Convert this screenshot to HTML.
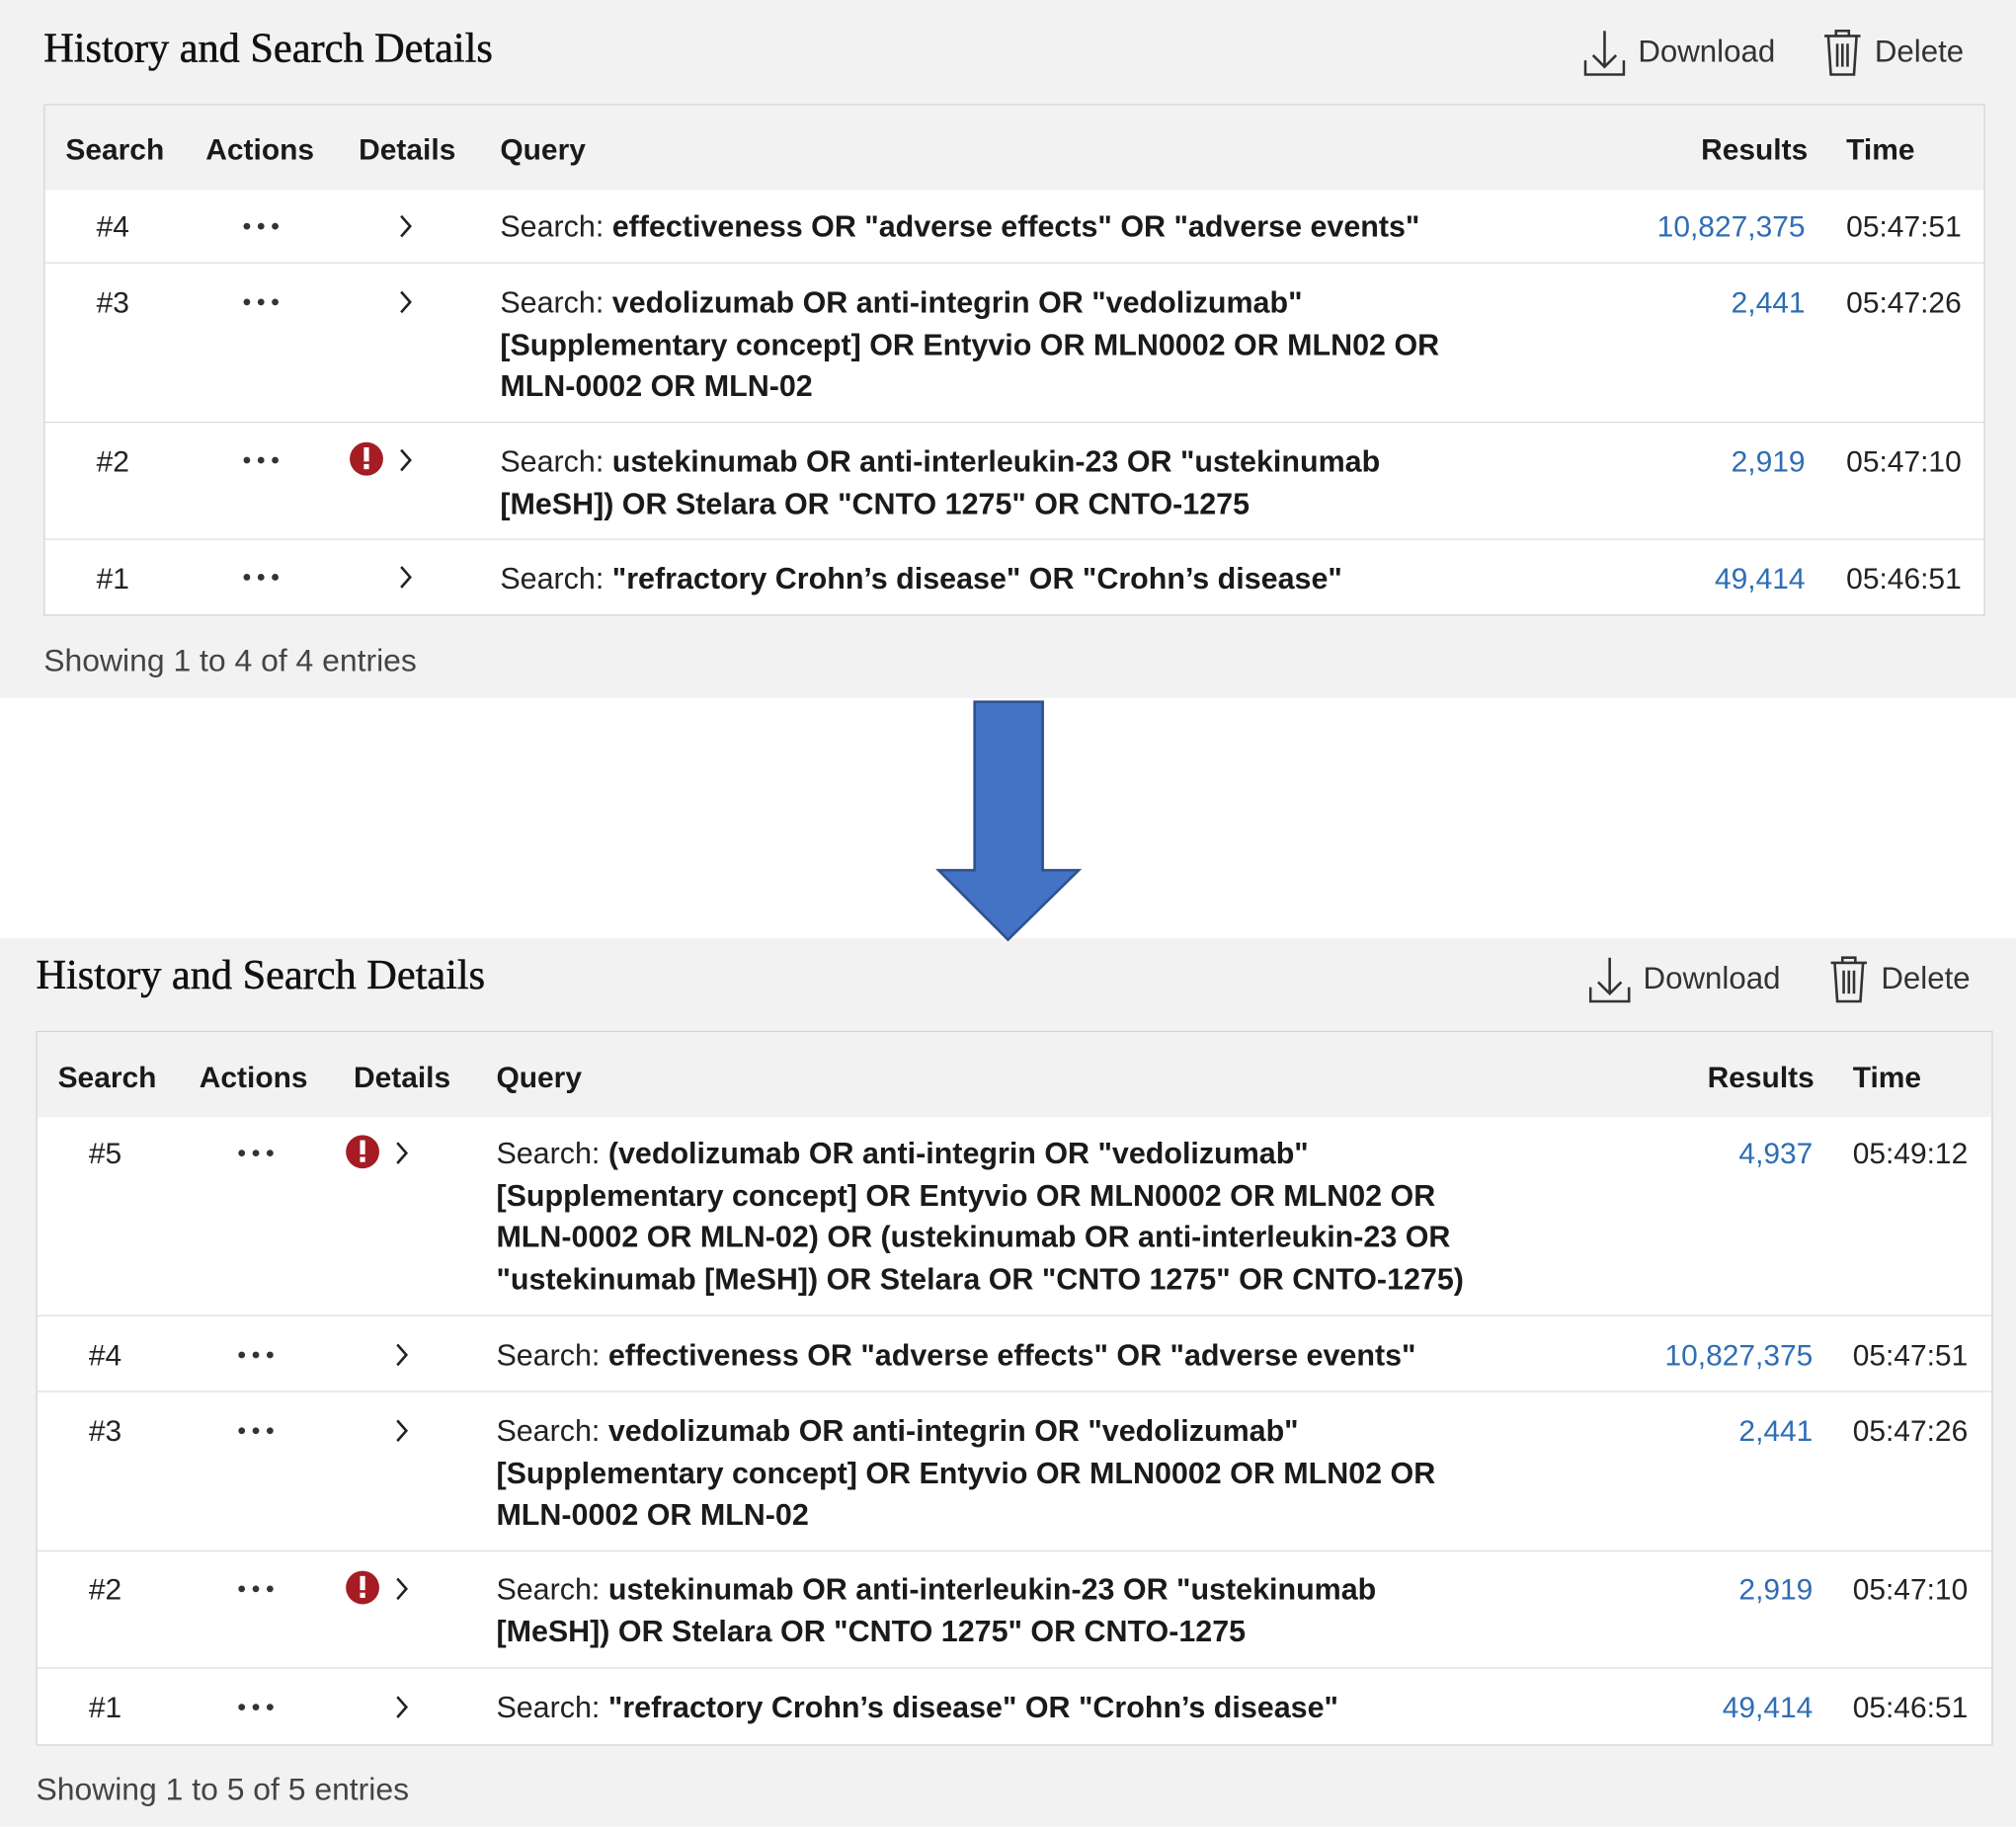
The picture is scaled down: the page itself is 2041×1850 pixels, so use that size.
<!DOCTYPE html>
<html><head><meta charset="utf-8"><style>
html,body{margin:0;padding:0;width:2041px;height:1850px;overflow:hidden;background:#fff}
#s{position:absolute;left:0;top:0;width:1568px;height:1421px;transform:scale(1.30166);transform-origin:0 0;font-family:"Liberation Sans",sans-serif;color:#222}
.bg{position:absolute;left:0;width:1568px;background:#f2f2f2}
.t{position:absolute;white-space:nowrap;font-size:23px;line-height:32.5px}
.q{font-size:23.4px}
.title{position:absolute;font-family:"Liberation Serif",serif;font-size:32.5px;color:#111;white-space:nowrap;-webkit-text-stroke:0.4px #111}
.box{position:absolute;border:1px solid #d3d3d3;background:#fff;box-sizing:border-box}
.hdr{position:absolute;left:0;right:0;top:0;height:66px;background:#f2f2f2}
.h{position:absolute;font-weight:bold;font-size:23px;line-height:32px;color:#1a1a1a;white-space:nowrap}
.line{position:absolute;left:0;right:0;height:1px;background:#dedede}
.b{font-weight:bold;color:#1a1a1a}
.r{position:absolute;text-align:right;color:#2f6db5;font-size:23px;line-height:32.5px}
.act{position:absolute;font-size:24px;color:#333;white-space:nowrap}
.sh{position:absolute;font-size:24.5px;color:#444;white-space:nowrap}
</style></head><body><div id="s">
<div class="bg" style="top:0;height:543px"></div>
<div class="bg" style="top:730px;height:691px"></div>

<svg style="position:absolute;left:0;top:0" width="1568" height="740"><polygon points="758,546 811,546 811,677 839,677 784,731 730,677 758,677" fill="#4472c4" stroke="#2f528f" stroke-width="2"/></svg>

<!-- TOP PANEL -->
<div class="title" style="left:34px;top:20px">History and Search Details</div>
<svg style="position:absolute;left:1232px;top:22px" width="32" height="38" viewBox="0 0 32 38"><path d="M16 2V30M7 21l9 9 9-9M1 25v11h30V25" fill="none" stroke="#333" stroke-width="2"/></svg>
<div class="act" style="left:1274px;top:27px">Download</div>
<svg style="position:absolute;left:1418px;top:22px" width="30" height="38" viewBox="0 0 30 38"><path d="M1 6h28M10 6V2h10v4M4 6l2 30h18l2-30M11 12v18M15 12v18M19 12v18" fill="none" stroke="#333" stroke-width="2"/></svg>
<div class="act" style="left:1458px;top:27px">Delete</div>

<div class="box" style="left:34px;top:81px;width:1510px;height:398px">
 <div class="hdr"></div>
 <div class="line" style="top:122px"></div><div class="line" style="top:246px"></div><div class="line" style="top:337px"></div>
</div>
<div class="h" style="left:51px;top:100px">Search</div>
<div class="h" style="left:160px;top:100px">Actions</div>
<div class="h" style="left:279px;top:100px">Details</div>
<div class="h" style="left:389px;top:100px">Query</div>
<div class="h" style="left:1323px;top:100px">Results</div>
<div class="h" style="left:1436px;top:100px">Time</div>

<div class="t" style="left:75px;top:160px">#4</div>
<div class="t" style="left:75px;top:219px">#3</div>
<div class="t" style="left:75px;top:343px">#2</div>
<div class="t" style="left:75px;top:434px">#1</div>
<svg style="position:absolute;left:0;top:0" width="1568" height="543">
 <g fill="#333"><circle cx="192" cy="176" r="2.6"/><circle cx="203" cy="176" r="2.6"/><circle cx="214" cy="176" r="2.6"/>
 <circle cx="192" cy="235" r="2.6"/><circle cx="203" cy="235" r="2.6"/><circle cx="214" cy="235" r="2.6"/>
 <circle cx="192" cy="358" r="2.6"/><circle cx="203" cy="358" r="2.6"/><circle cx="214" cy="358" r="2.6"/>
 <circle cx="192" cy="449" r="2.6"/><circle cx="203" cy="449" r="2.6"/><circle cx="214" cy="449" r="2.6"/></g>
 <g fill="none" stroke="#222" stroke-width="2"><path d="M312 168l7 8-7 8"/><path d="M312 227l7 8-7 8"/><path d="M312 350l7 8-7 8"/><path d="M312 441l7 8-7 8"/></g>
 <circle cx="285" cy="357" r="13" fill="#a51c24"/><rect x="283" y="348" width="4" height="11" fill="#fff"/><rect x="283" y="361" width="4" height="4" fill="#fff"/>
</svg>
<div class="t q" style="left:389px;top:160px">Search: <span class="b">effectiveness OR "adverse effects" OR "adverse events"</span></div>
<div class="t q" style="left:389px;top:219px">Search: <span class="b">vedolizumab OR anti-integrin OR "vedolizumab"<br>[Supplementary concept] OR Entyvio OR MLN0002 OR MLN02 OR<br>MLN-0002 OR MLN-02</span></div>
<div class="t q" style="left:389px;top:343px">Search: <span class="b">ustekinumab OR anti-interleukin-23 OR "ustekinumab<br>[MeSH]) OR Stelara OR "CNTO 1275" OR CNTO-1275</span></div>
<div class="t q" style="left:389px;top:434px">Search: <span class="b">"refractory Crohn’s disease" OR "Crohn’s disease"</span></div>
<div class="r" style="right:164px;top:160px">10,827,375</div>
<div class="r" style="right:164px;top:219px">2,441</div>
<div class="r" style="right:164px;top:343px">2,919</div>
<div class="r" style="right:164px;top:434px">49,414</div>
<div class="t" style="left:1436px;top:160px">05:47:51</div>
<div class="t" style="left:1436px;top:219px">05:47:26</div>
<div class="t" style="left:1436px;top:343px">05:47:10</div>
<div class="t" style="left:1436px;top:434px">05:46:51</div>
<div class="sh" style="left:34px;top:501px">Showing 1 to 4 of 4 entries</div>

<!-- BOTTOM PANEL -->
<div class="title" style="left:28px;top:741px">History and Search Details</div>
<svg style="position:absolute;left:1236px;top:743px" width="32" height="38" viewBox="0 0 32 38"><path d="M16 2V30M7 21l9 9 9-9M1 25v11h30V25" fill="none" stroke="#333" stroke-width="2"/></svg>
<div class="act" style="left:1278px;top:748px">Download</div>
<svg style="position:absolute;left:1423px;top:743px" width="30" height="38" viewBox="0 0 30 38"><path d="M1 6h28M10 6V2h10v4M4 6l2 30h18l2-30M11 12v18M15 12v18M19 12v18" fill="none" stroke="#333" stroke-width="2"/></svg>
<div class="act" style="left:1463px;top:748px">Delete</div>

<div class="box" style="left:28px;top:802px;width:1522px;height:556px">
 <div class="hdr"></div>
 <div class="line" style="top:220px"></div><div class="line" style="top:279px"></div><div class="line" style="top:403px"></div><div class="line" style="top:494px"></div>
</div>
<div class="h" style="left:45px;top:822px">Search</div>
<div class="h" style="left:155px;top:822px">Actions</div>
<div class="h" style="left:275px;top:822px">Details</div>
<div class="h" style="left:386px;top:822px">Query</div>
<div class="h" style="left:1328px;top:822px">Results</div>
<div class="h" style="left:1441px;top:822px">Time</div>

<div class="t" style="left:69px;top:881px">#5</div>
<div class="t" style="left:69px;top:1038px">#4</div>
<div class="t" style="left:69px;top:1097px">#3</div>
<div class="t" style="left:69px;top:1220px">#2</div>
<div class="t" style="left:69px;top:1312px">#1</div>
<svg style="position:absolute;left:0;top:0" width="1568" height="1421">
 <g fill="#333">
 <circle cx="188" cy="897" r="2.6"/><circle cx="199" cy="897" r="2.6"/><circle cx="210" cy="897" r="2.6"/>
 <circle cx="188" cy="1054" r="2.6"/><circle cx="199" cy="1054" r="2.6"/><circle cx="210" cy="1054" r="2.6"/>
 <circle cx="188" cy="1113" r="2.6"/><circle cx="199" cy="1113" r="2.6"/><circle cx="210" cy="1113" r="2.6"/>
 <circle cx="188" cy="1236" r="2.6"/><circle cx="199" cy="1236" r="2.6"/><circle cx="210" cy="1236" r="2.6"/>
 <circle cx="188" cy="1328" r="2.6"/><circle cx="199" cy="1328" r="2.6"/><circle cx="210" cy="1328" r="2.6"/></g>
 <g fill="none" stroke="#222" stroke-width="2"><path d="M309 889l7 8-7 8"/><path d="M309 1046l7 8-7 8"/><path d="M309 1105l7 8-7 8"/><path d="M309 1228l7 8-7 8"/><path d="M309 1320l7 8-7 8"/></g>
 <circle cx="282" cy="896" r="13" fill="#a51c24"/><rect x="280" y="887" width="4" height="11" fill="#fff"/><rect x="280" y="900" width="4" height="4" fill="#fff"/>
 <circle cx="282" cy="1235" r="13" fill="#a51c24"/><rect x="280" y="1226" width="4" height="11" fill="#fff"/><rect x="280" y="1239" width="4" height="4" fill="#fff"/>
</svg>
<div class="t q" style="left:386px;top:881px">Search: <span class="b">(vedolizumab OR anti-integrin OR "vedolizumab"<br>[Supplementary concept] OR Entyvio OR MLN0002 OR MLN02 OR<br>MLN-0002 OR MLN-02) OR (ustekinumab OR anti-interleukin-23 OR<br>"ustekinumab [MeSH]) OR Stelara OR "CNTO 1275" OR CNTO-1275)</span></div>
<div class="t q" style="left:386px;top:1038px">Search: <span class="b">effectiveness OR "adverse effects" OR "adverse events"</span></div>
<div class="t q" style="left:386px;top:1097px">Search: <span class="b">vedolizumab OR anti-integrin OR "vedolizumab"<br>[Supplementary concept] OR Entyvio OR MLN0002 OR MLN02 OR<br>MLN-0002 OR MLN-02</span></div>
<div class="t q" style="left:386px;top:1220px">Search: <span class="b">ustekinumab OR anti-interleukin-23 OR "ustekinumab<br>[MeSH]) OR Stelara OR "CNTO 1275" OR CNTO-1275</span></div>
<div class="t q" style="left:386px;top:1312px">Search: <span class="b">"refractory Crohn’s disease" OR "Crohn’s disease"</span></div>
<div class="r" style="right:158px;top:881px">4,937</div>
<div class="r" style="right:158px;top:1038px">10,827,375</div>
<div class="r" style="right:158px;top:1097px">2,441</div>
<div class="r" style="right:158px;top:1220px">2,919</div>
<div class="r" style="right:158px;top:1312px">49,414</div>
<div class="t" style="left:1441px;top:881px">05:49:12</div>
<div class="t" style="left:1441px;top:1038px">05:47:51</div>
<div class="t" style="left:1441px;top:1097px">05:47:26</div>
<div class="t" style="left:1441px;top:1220px">05:47:10</div>
<div class="t" style="left:1441px;top:1312px">05:46:51</div>
<div class="sh" style="left:28px;top:1379px">Showing 1 to 5 of 5 entries</div>
</div></body></html>
